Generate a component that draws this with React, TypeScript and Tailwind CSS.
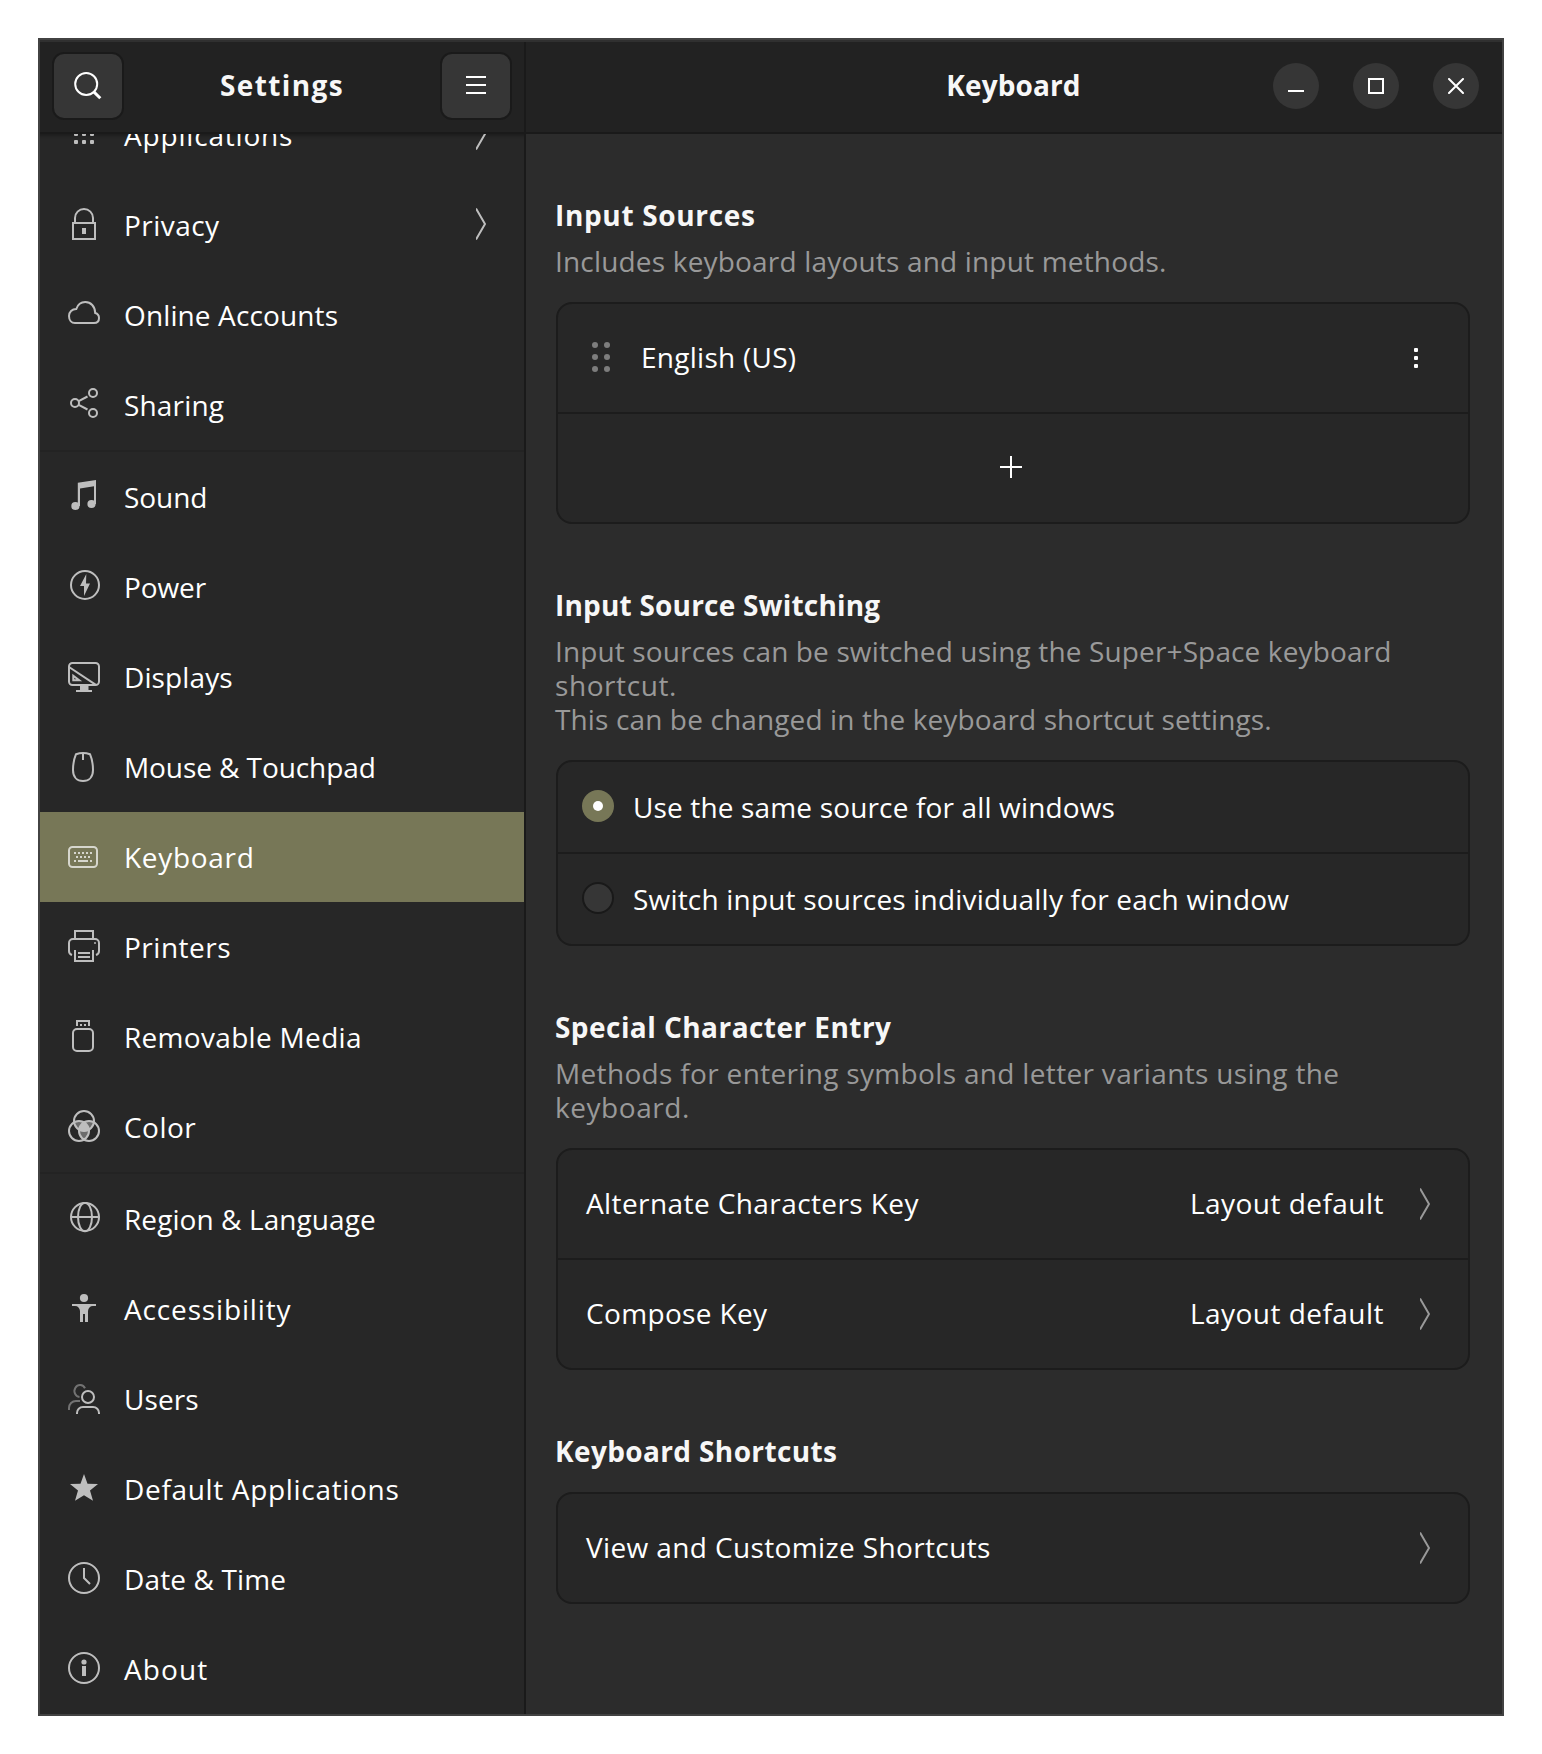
import type { ReactNode } from "react";

function Icon({ children, className = "" }: { children: ReactNode; className?: string }) {
  return (
    <svg
      viewBox="0 0 32 32"
      className={`size-8 shrink-0 ${className}`}
      fill="none"
      stroke="currentColor"
      strokeWidth={2}
    >
      {children}
    </svg>
  );
}

const solid = { fill: "currentColor", stroke: "none" };

const icons: Record<string, ReactNode> = {
  applications: (
    <g {...solid}>
      {[6, 14, 22].map((y) => [6, 14, 22].map((x) => <rect key={`${x}-${y}`} x={x} y={y} width="4" height="4" rx="1" />))}
    </g>
  ),
  privacy: (
    <>
      <path d="M7 15V10a9 9 0 0 1 18 0V15" />
      <rect x="5" y="15" width="22" height="16" />
      <rect x="14" y="20" width="4" height="6" {...solid} />
    </>
  ),
  cloud: (
    <path d="M7 25C3.5 25 1 22.2 1 18C1 14 4 11 8.3 11C9.7 6.8 13 4 17.3 4C22.8 4 27 8.3 27.2 15C30 15.8 31 18 31 20C31 23 29 25 26 25Z" />
  ),
  sharing: (
    <>
      <circle cx="25" cy="5" r="4" />
      <circle cx="7" cy="15" r="4" />
      <circle cx="25" cy="25" r="4" />
      <path d="M10.7 13.2L19.5 8.5M10.7 16.8L19.5 21.5" />
    </>
  ),
  sound: (
    <g {...solid}>
      <circle cx="7.4" cy="26" r="4.1" />
      <circle cx="23.5" cy="24" r="4.1" />
      <path d="M9.8 26V2.8L28 0V24H26V6.2L12 8.6V26Z" />
    </g>
  ),
  power: (
    <>
      <circle cx="17" cy="15" r="14" />
      <path d="M18.3 4L12 16H16L16 26L22 13.4H18Z" {...solid} />
    </>
  ),
  displays: (
    <>
      <rect x="1" y="3" width="30" height="22" rx="3.5" />
      <path d="M1 7L27.5 24.6" />
      <path d="M5.3 15.8V20.3H11.2Z" />
      <path d="M12 26H20.5V30H24V32H8V30H12Z" {...solid} />
    </>
  ),
  mouse: (
    <>
      <path d="M8 4.2C12 2.7 18 2.7 22 4.2C24 9 25 15 25 20C25 27 21 31 15 31C9 31 5 27 5 20C5 15 6 9 8 4.2Z" />
      <path d="M15 3V10" />
    </>
  ),
  keyboard: (
    <>
      <rect x="1" y="7" width="28" height="20" rx="3.5" />
      <path d="M6 13H24" strokeDasharray="2 2" />
      <path d="M8 17H22" strokeDasharray="2 2" />
      <path d="M6 21H8M10 21H20M22 21H24" />
    </>
  ),
  printers: (
    <>
      <path d="M7 9V1H25V9" />
      <path d="M4 25C2 24.3 1 23 1 21V13a4 4 0 0 1 4-4H27a4 4 0 0 1 4 4V21C31 23 30 24.3 28 25" />
      <path d="M7 20V31H25V20M10 23H22M10 27H22" />
      <rect x="26" y="12" width="2" height="2" opacity=".7" {...solid} />
    </>
  ),
  removable: (
    <>
      <path d="M9 6V1H21V6M12 5H14M16 5H18" />
      <rect x="5" y="9" width="20" height="22" rx="4" />
    </>
  ),
  color: (
    <>
      <clipPath id="color-top"><circle cx="16" cy="11" r="10" /></clipPath>
      <clipPath id="color-left"><circle cx="11" cy="21" r="10" /></clipPath>
      <g fill="currentColor" stroke="none">
        <circle cx="11" cy="21" r="10" clipPath="url(#color-top)" opacity=".45" />
        <circle cx="21" cy="21" r="10" clipPath="url(#color-top)" opacity=".45" />
        <circle cx="21" cy="21" r="10" clipPath="url(#color-left)" opacity=".45" />
        <g clipPath="url(#color-left)"><circle cx="21" cy="21" r="10" clipPath="url(#color-top)" /></g>
      </g>
      <circle cx="16" cy="11" r="10" />
      <circle cx="11" cy="21" r="10" />
      <circle cx="21" cy="21" r="10" />
    </>
  ),
  region: (
    <>
      <circle cx="17" cy="15" r="14" />
      <ellipse cx="17" cy="15" rx="7" ry="14.3" />
      <path d="M3 15H31" />
    </>
  ),
  accessibility: (
    <g {...solid}>
      <circle cx="16" cy="6" r="4.1" />
      <path d="M4 12H28V14H25C22 14 20.3 16 20 19V30H17V22H15V30H12V19C11.7 16 10 14 7 14H4Z" />
    </g>
  ),
  users: (
    <>
      <circle cx="20" cy="15" r="6" />
      <path d="M9 32V31a6 6 0 0 1 6-6H25a6 6 0 0 1 6 6V32" />
      <path d="M17 6.2A5.6 6 0 1 0 11.5 15M1 28V26a7 7 0 0 1 7-7H12" opacity=".5" />
    </>
  ),
  star: (
    <path d="M16 2L19.5 11.8L30 12L22 18.5L25 28.7L16 23.2L7 28.7L10 18.5L2 12L12.5 11.8Z" {...solid} />
  ),
  clock: (
    <>
      <circle cx="16" cy="16" r="15" />
      <path d="M16 6V16L22 22" />
    </>
  ),
  about: (
    <>
      <circle cx="16" cy="16" r="15" />
      <circle cx="16" cy="10" r="2.6" {...solid} />
      <rect x="14" y="14" width="4" height="10" {...solid} />
    </>
  ),
};

type Item = { label: string; icon: string; tracking: string; arrow?: boolean; active?: boolean };

const groups: Item[][] = [
  [
    { label: "Applications", icon: "applications", tracking: "tracking-[0.81px]", arrow: true },
    { label: "Privacy", icon: "privacy", tracking: "tracking-[0.45px]", arrow: true },
    { label: "Online Accounts", icon: "cloud", tracking: "tracking-[0.12px]" },
    { label: "Sharing", icon: "sharing", tracking: "tracking-[0.16px]" },
  ],
  [
    { label: "Sound", icon: "sound", tracking: "tracking-[-0.06px]" },
    { label: "Power", icon: "power", tracking: "tracking-[-0.1px]" },
    { label: "Displays", icon: "displays", tracking: "tracking-[0.11px]" },
    { label: "Mouse & Touchpad", icon: "mouse", tracking: "tracking-[-0.08px]" },
    { label: "Keyboard", icon: "keyboard", tracking: "tracking-[0.69px]", active: true },
    { label: "Printers", icon: "printers", tracking: "tracking-[0.52px]" },
    { label: "Removable Media", icon: "removable", tracking: "tracking-[0.31px]" },
    { label: "Color", icon: "color", tracking: "tracking-[0.48px]" },
  ],
  [
    { label: "Region & Language", icon: "region", tracking: "tracking-[0.08px]" },
    { label: "Accessibility", icon: "accessibility", tracking: "tracking-[0.85px]" },
    { label: "Users", icon: "users", tracking: "tracking-[0.09px]" },
    { label: "Default Applications", icon: "star", tracking: "tracking-[0.67px]" },
    { label: "Date & Time", icon: "clock", tracking: "tracking-[0.14px]" },
    { label: "About", icon: "about", tracking: "tracking-[1.09px]" },
  ],
];

function Chevron({ className = "" }: { className?: string }) {
  return (
    <svg viewBox="0 0 10 32" className={`h-8 w-2.5 shrink-0 ${className}`} fill="none" stroke="currentColor" strokeWidth={2}>
      <path d="M0 0.5L9 16L0 31.5" />
    </svg>
  );
}

function SidebarRow({ item }: { item: Item }) {
  return (
    <div className={`flex h-[90px] shrink-0 items-center pr-[38px] pl-7 ${item.active ? "bg-[#777757]" : ""}`}>
      <Icon className="mb-0.5 opacity-70">{icons[item.icon]}</Icon>
      <span className={`ml-6 flex-1 ${item.tracking}`}>{item.label}</span>
      {item.arrow && <Chevron className="mb-0.5 opacity-70" />}
    </div>
  );
}

function Section({ title, tracking, children }: { title: string; tracking: string; children: ReactNode }) {
  return (
    <section className="mb-16">
      <h2 className={`-ml-px font-bold text-[#f7f7f7] ${tracking}`}>{title}</h2>
      {children}
    </section>
  );
}

function Card({ children }: { children: ReactNode }) {
  return (
    <div className="mt-6 divide-y-2 divide-[#1c1c1c] rounded-2xl border-2 border-[#1c1c1c] bg-[#272727]">{children}</div>
  );
}

function LinkRow({ label, tracking, value }: { label: string; tracking: string; value?: string }) {
  return (
    <div className="box-content flex h-[108px] items-center pr-[38px] pl-7">
      <span className={`mb-0.5 flex-1 ${tracking}`}>{label}</span>
      {value && <span className="mr-9 mb-0.5 tracking-[0.47px]">{value}</span>}
      <Chevron className="text-[#999]" />
    </div>
  );
}

function WindowButton({ children }: { children: ReactNode }) {
  return (
    <button className="flex size-[46px] items-center justify-center rounded-full bg-[#363636]">
      <svg viewBox="0 0 16 16" className="size-4" fill="none" stroke="#fff" strokeWidth={2}>
        {children}
      </svg>
    </button>
  );
}

export default function App() {
  return (
    <div className="h-[1754px] w-[1542px] bg-white p-[38px] font-['Open_Sans','Noto_Sans',sans-serif] text-[28px] leading-[34px] text-white">
      <div className="flex h-[1678px] w-[1466px] flex-col overflow-hidden border-2 border-[#424242] bg-[#2c2c2c]">
        <header className="flex h-[94px] shrink-0 border-t-2 border-b-2 border-t-[#303030] border-b-[#1a1a1a] bg-[#222]">
          <div className="flex w-[486px] items-center justify-between border-r-2 border-[#1a1a1a] px-3">
            <button className="mb-0.5 flex h-[68px] w-[72px] items-center justify-center rounded-xl border-2 border-[#1a1a1a] bg-[#363636]">
              <Icon>
                <circle cx="14.2" cy="14" r="11" />
                <path d="M21.6 21.6L28.3 28.3" strokeWidth={3} />
              </Icon>
            </button>
            <h1 className="mb-1 font-bold tracking-[1.37px] text-[#f7f7f7]">Settings</h1>
            <button className="mb-0.5 flex h-[68px] w-[72px] items-center justify-center rounded-xl border-2 border-[#1a1a1a] bg-[#363636]">
              <Icon>
                <path d="M6 7H26M6 15H26M6 23H26" />
              </Icon>
            </button>
          </div>
          <div className="grid flex-1 grid-cols-[1fr_auto_1fr] items-center pr-[23px]">
            <span />
            <h1 className="mb-1 ml-[22px] font-bold tracking-[0.11px] text-[#f7f7f7]">Keyboard</h1>
            <div className="mb-0.5 flex justify-end gap-[34px]">
              <WindowButton>
                <path d="M0 13H16" />
              </WindowButton>
              <WindowButton>
                <rect x="1" y="1" width="14" height="14" />
              </WindowButton>
              <WindowButton>
                <path d="M1 1L15 15M15 1L1 15" strokeLinecap="round" />
              </WindowButton>
            </div>
          </div>
        </header>

        <div className="flex min-h-0 flex-1">
          <nav className="flex w-[486px] shrink-0 flex-col justify-end overflow-hidden border-r-2 border-[#1a1a1a] bg-[#272727] shadow-[inset_0_5px_3px_-3px_rgba(0,0,0,0.25)]">
            {groups.map((group, i) => (
              <div key={i} className={i > 0 ? "border-t-2 border-[#232323]" : ""}>
                {group.map((item) => (
                  <SidebarRow key={item.label} item={item} />
                ))}
              </div>
            ))}
          </nav>

          <main className="min-w-0 flex-1 pt-16 pr-8 pl-[30px]">
            <Section title="Input Sources" tracking="tracking-[0.66px]">
              <p className="mt-3 -ml-px tracking-[0.18px] text-[#999]">Includes keyboard layouts and input methods.</p>
              <Card>
                <div className="box-content flex h-[108px] items-center pr-[50px] pl-[34px]">
                  <svg viewBox="0 0 18 30" className="mb-0.5 h-[30px] w-[18px]" fill="#7d7d7d">
                    {[3, 15, 27].map((y) => [3, 15].map((x) => <circle key={`${x}-${y}`} cx={x} cy={y} r="3" />))}
                  </svg>
                  <span className="mb-0.5 ml-[31px] flex-1 tracking-[0.27px]">English (US)</span>
                  <svg viewBox="0 0 4 20" className="h-5 w-1" fill="#fff">
                    {[0, 8, 16].map((y) => <rect key={y} y={y} width="4" height="4" rx="1" />)}
                  </svg>
                </div>
                <div className="flex h-[108px] items-center justify-center pr-1">
                  <svg viewBox="0 0 22 22" className="mb-0.5 size-[22px]" fill="none" stroke="#fff" strokeWidth={2}>
                    <path d="M0 11H22M11 0V22" />
                  </svg>
                </div>
              </Card>
            </Section>

            <Section title="Input Source Switching" tracking="tracking-[0.2px]">
              <p className="mt-3 -ml-px whitespace-nowrap text-[#999]">
                <span className="block tracking-[0.13px]">Input sources can be switched using the Super+Space keyboard</span>
                <span className="block tracking-[0.58px]">shortcut.</span>
                <span className="block tracking-[0.13px]">This can be changed in the keyboard shortcut settings.</span>
              </p>
              <Card>
                <div className="box-content flex h-[90px] items-center pl-6">
                  <span className="mb-0.5 flex size-8 items-center justify-center rounded-full bg-[#777757]">
                    <span className="size-2.5 rounded-full bg-white" />
                  </span>
                  <span className="ml-[19px] tracking-[0.15px]">Use the same source for all windows</span>
                </div>
                <div className="box-content flex h-[90px] items-center pl-6">
                  <span className="mb-0.5 size-8 rounded-full border-2 border-[#191919] bg-[#363636]" />
                  <span className="ml-[19px] tracking-[0.19px]">Switch input sources individually for each window</span>
                </div>
              </Card>
            </Section>

            <Section title="Special Character Entry" tracking="tracking-[0.45px]">
              <p className="mt-3 -ml-px whitespace-nowrap text-[#999]">
                <span className="block tracking-[0.33px]">Methods for entering symbols and letter variants using the</span>
                <span className="block tracking-[0.55px]">keyboard.</span>
              </p>
              <Card>
                <LinkRow label="Alternate Characters Key" tracking="tracking-[0.41px]" value="Layout default" />
                <LinkRow label="Compose Key" tracking="tracking-[0.34px]" value="Layout default" />
              </Card>
            </Section>

            <Section title="Keyboard Shortcuts" tracking="tracking-[0.37px]">
              <Card>
                <LinkRow label="View and Customize Shortcuts" tracking="tracking-[0.37px]" />
              </Card>
            </Section>
          </main>
        </div>
      </div>
    </div>
  );
}
